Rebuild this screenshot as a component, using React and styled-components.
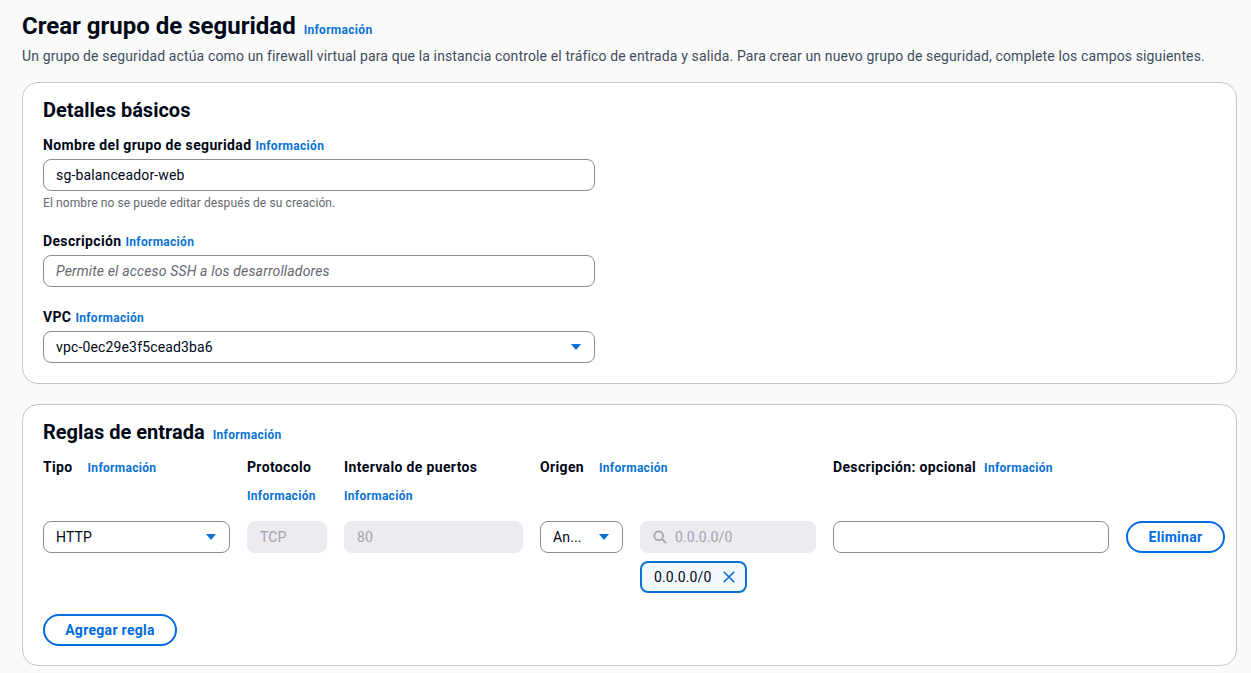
import styled, { createGlobalStyle } from "styled-components";

const GlobalStyle = createGlobalStyle`
  body {
    margin: 0;
    background: #fafafa;
    font-family: Roboto, "Noto Sans", Arial, sans-serif;
    color: #000716;
  }
  * { box-sizing: border-box; }
`;

const Page = styled.div`
  padding: 11px 14px 7px 22px;
`;

const TitleRow = styled.div`
  display: flex;
  align-items: baseline;
  gap: 8px;
`;

const Title = styled.h1`
  margin: 0;
  font-size: 24px;
  line-height: 30px;
  font-weight: 700;
`;

const Info = styled.a`
  font-size: 12px;
  font-weight: 700;
  color: #0972d3;
  line-height: 16px;
  letter-spacing: 0.3px;
  cursor: pointer;
`;

const Lead = styled.p`
  margin: 5px 0 16px;
  font-size: 14px;
  line-height: 20px;
  letter-spacing: 0.13px;
  color: #414d5c;
`;

const Card = styled.section`
  background: #fff;
  border: 1px solid #c6c6cd;
  border-radius: 16px;
  padding: ${(p) => p.$pad || "15px 20px 20px"};
  margin-bottom: 20px;
`;

const CardTitleRow = styled.div`
  display: flex;
  align-items: baseline;
  gap: 8px;
  margin-bottom: ${(p) => p.$mb || "13px"};
`;

const CardTitle = styled.h2`
  margin: 0;
  font-size: 20px;
  line-height: 24px;
  font-weight: 700;
`;

const Field = styled.div`
  width: 552px;
  margin-bottom: ${(p) => p.$mb || "0"};
`;

const LabelRow = styled.div`
  display: flex;
  align-items: baseline;
  gap: 4px;
  margin-bottom: 4px;
`;

const Label = styled.span`
  font-size: 14px;
  line-height: 20px;
  font-weight: 700;
  letter-spacing: 0.35px;
`;

const Input = styled.div`
  height: 32px;
  border: 1px solid #8c8c94;
  border-radius: 8px;
  background: ${(p) => (p.$disabled ? "#ebebf0" : "#fff")};
  border-color: ${(p) => (p.$disabled ? "#ebebf0" : "#8c8c94")};
  display: flex;
  align-items: center;
  gap: 8px;
  padding: 0 12px;
  font-size: 14px;
  letter-spacing: 0.15px;
  color: ${(p) => (p.$disabled ? "#a4a4ad" : "#000716")};
  font-style: ${(p) => (p.$placeholder ? "italic" : "normal")};
  ${(p) => p.$placeholder && "color: #656871;"}
`;

const Grow = styled.span`
  flex: 1;
  white-space: nowrap;
  overflow: hidden;
`;

const Hint = styled.div`
  margin-top: 4px;
  font-size: 12px;
  line-height: 16px;
  letter-spacing: 0.1px;
  color: #656871;
`;

const cols = "187px 80px 179px 83px 176px 276px 99px";

const HeadGrid = styled.div`
  display: grid;
  grid-template-columns: ${cols};
  column-gap: 17px;
  margin-bottom: 17px;
`;

const Head = styled.div`
  grid-column: ${(p) => p.$span || "auto"};
  display: flex;
  flex-wrap: wrap;
  align-items: baseline;
  column-gap: ${(p) => p.$gap || "15px"};
  row-gap: 11px;
`;

const RowGrid = styled.div`
  display: grid;
  grid-template-columns: ${cols};
  column-gap: 17px;
  row-gap: 8px;
  align-items: start;
`;

const TokenCell = styled.div`
  grid-column: 5;
`;

const Token = styled.div`
  display: inline-flex;
  align-items: center;
  gap: 10px;
  height: 32px;
  padding: 0 9px 0 12px;
  border: 2px solid #0972d3;
  border-radius: 8px;
  background: #f2f8fd;
  font-size: 14px;
  letter-spacing: 0.15px;
`;

const Button = styled.button`
  height: 32px;
  padding: 0 20px;
  border: 2px solid #006ce0;
  border-radius: 20px;
  background: #fff;
  color: #006ce0;
  font-family: inherit;
  font-size: 14px;
  font-weight: 700;
  letter-spacing: 0.3px;
  cursor: pointer;
  width: ${(p) => p.$w || "auto"};
  margin-top: ${(p) => p.$mt || "0"};
`;

const Caret = () => (
  <svg width="12" height="8" viewBox="0 0 12 8">
    <path d="M1 1h10L6 7z" fill="#0972d3" />
  </svg>
);

const Search = () => (
  <svg width="14" height="14" viewBox="0 0 16 16" fill="none" stroke="#a4a4ad" strokeWidth="2">
    <circle cx="6.5" cy="6.5" r="5" />
    <path d="M10.3 10.3L15 15" />
  </svg>
);

const Close = () => (
  <svg width="14" height="14" viewBox="0 0 16 16" fill="none" stroke="#0972d3" strokeWidth="2">
    <path d="M2 2l12 12M14 2L2 14" />
  </svg>
);

export default function App() {
  return (
    <>
      <GlobalStyle />
      <Page>
        <TitleRow>
          <Title>Crear grupo de seguridad</Title>
          <Info>Información</Info>
        </TitleRow>
        <Lead>
          Un grupo de seguridad actúa como un firewall virtual para que la instancia controle el tráfico de entrada y salida. Para crear un nuevo grupo de seguridad, complete los campos siguientes.
        </Lead>

        <Card>
          <CardTitleRow>
            <CardTitle>Detalles básicos</CardTitle>
          </CardTitleRow>
          <Field $mb="20px">
            <LabelRow>
              <Label>Nombre del grupo de seguridad</Label>
              <Info>Información</Info>
            </LabelRow>
            <Input>
              <Grow>sg-balanceador-web</Grow>
            </Input>
            <Hint>El nombre no se puede editar después de su creación.</Hint>
          </Field>
          <Field $mb="20px">
            <LabelRow>
              <Label>Descripción</Label>
              <Info>Información</Info>
            </LabelRow>
            <Input $placeholder>
              <Grow>Permite el acceso SSH a los desarrolladores</Grow>
            </Input>
          </Field>
          <Field>
            <LabelRow>
              <Label>VPC</Label>
              <Info>Información</Info>
            </LabelRow>
            <Input>
              <Grow>vpc-0ec29e3f5cead3ba6</Grow>
              <Caret />
            </Input>
          </Field>
        </Card>

        <Card $pad="15px 20px 19px">
          <CardTitleRow $mb="13px">
            <CardTitle>Reglas de entrada</CardTitle>
            <Info>Información</Info>
          </CardTitleRow>
          <HeadGrid>
            <Head>
              <Label>Tipo</Label>
              <Info>Información</Info>
            </Head>
            <Head>
              <Label>Protocolo</Label>
              <Info>Información</Info>
            </Head>
            <Head>
              <Label>Intervalo de puertos</Label>
              <Info>Información</Info>
            </Head>
            <Head $span="4 / span 2">
              <Label>Origen</Label>
              <Info>Información</Info>
            </Head>
            <Head $gap="8px">
              <Label>Descripción: opcional</Label>
              <Info>Información</Info>
            </Head>
          </HeadGrid>
          <RowGrid>
            <Input>
              <Grow>HTTP</Grow>
              <Caret />
            </Input>
            <Input $disabled>
              <Grow>TCP</Grow>
            </Input>
            <Input $disabled>
              <Grow>80</Grow>
            </Input>
            <Input>
              <Grow>An...</Grow>
              <Caret />
            </Input>
            <Input $disabled>
              <Search />
              <Grow>0.0.0.0/0</Grow>
            </Input>
            <Input />
            <Button $w="99px">Eliminar</Button>
            <TokenCell>
              <Token>
                0.0.0.0/0
                <Close />
              </Token>
            </TokenCell>
          </RowGrid>
          <Button $w="134px" $mt="21px">Agregar regla</Button>
        </Card>
      </Page>
    </>
  );
}
